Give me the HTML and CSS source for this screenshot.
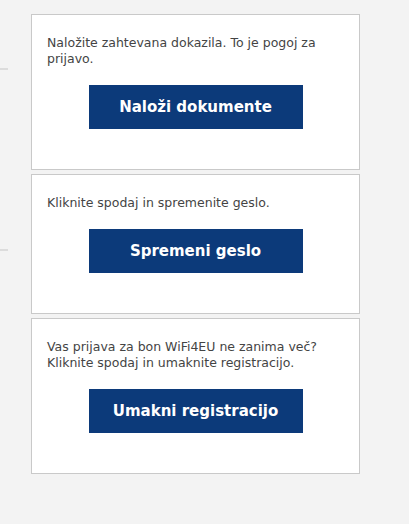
FILE: index.html
```html
<!DOCTYPE html>
<html lang="sl">
<head>
<meta charset="utf-8">
<title>WiFi4EU</title>
<link rel="stylesheet" href="styles.css">
</head>
<body>
<div class="page">
  <div class="side">
    <div class="side-rule side-rule-1"></div>
    <div class="side-rule side-rule-2"></div>
  </div>
  <main class="cards">
    <section class="card">
      <p class="card-text">Naložite zahtevana dokazila. To je pogoj za prijavo.</p>
      <a class="btn" href="#">Naloži dokumente</a>
    </section>
    <section class="card">
      <p class="card-text">Kliknite spodaj in spremenite geslo.</p>
      <a class="btn" href="#">Spremeni geslo</a>
    </section>
    <section class="card">
      <p class="card-text">Vas prijava za bon WiFi4EU ne zanima več? Kliknite spodaj in umaknite registracijo.</p>
      <a class="btn" href="#">Umakni registracijo</a>
    </section>
  </main>
</div>
</body>
</html>
```
FILE: styles.css
```css
html, body {
  margin: 0;
  padding: 0;
  background: #f3f3f3;
}
body {
  font-family: "DejaVu Sans", Verdana, sans-serif;
  color: #444;
  font-size: 12.5px;
  line-height: 16px;
}
.page {
  display: flex;
  align-items: flex-start;
  gap: 23px;
  padding-top: 14px;
}
.side {
  width: 8px;
  display: flex;
  flex-direction: column;
}
.side-rule {
  height: 2px;
  background: #dcdcdc;
}
.side-rule-1 { margin-top: 54px; }
.side-rule-2 { margin-top: 179px; }
.cards {
  width: 329px;
  display: flex;
  flex-direction: column;
  gap: 4px;
}
.card {
  background: #fff;
  border: 1px solid #c9c9c9;
  padding: 20px 15px 40px;
  display: flex;
  flex-direction: column;
  align-items: center;
}
.card-text {
  margin: 0 0 18px;
  align-self: stretch;
  padding-right: 5px;
}
.btn {
  display: flex;
  align-items: center;
  justify-content: center;
  width: 214px;
  height: 44px;
  background: #0c3a7a;
  color: #fff;
  font-weight: bold;
  font-size: 15px;
  text-decoration: none;
}
```
